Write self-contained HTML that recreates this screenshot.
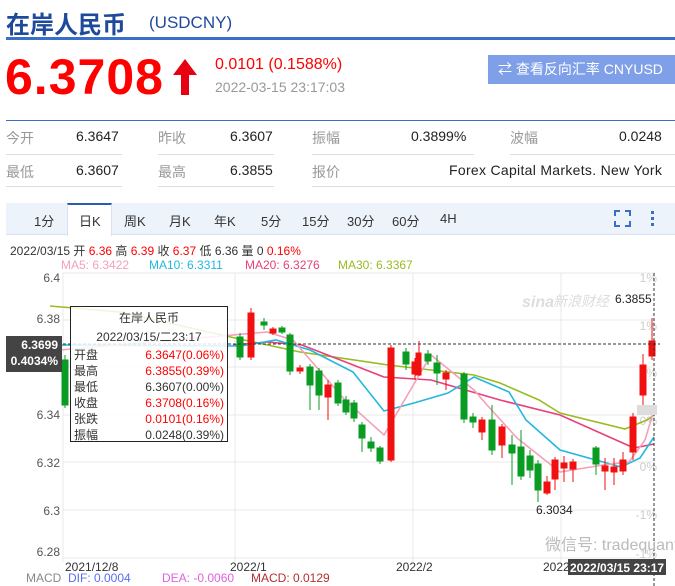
<!DOCTYPE html>
<html><head><meta charset="utf-8"><style>
*{margin:0;padding:0;box-sizing:border-box}
body{width:675px;height:586px;background:#fff;font-family:"Liberation Sans","Noto Sans CJK SC",sans-serif;position:relative;overflow:hidden;color:#333}
.a{position:absolute;white-space:nowrap}
</style></head><body>
<div class="a" style="left:6px;top:5px;font-size:24px;font-weight:bold;color:#1f4a9c;font-family:'Liberation Sans','Noto Sans CJK SC',sans-serif">在岸人民币</div>
<div class="a" style="left:149px;top:13px;font-size:17px;color:#1f4a9c">(USDCNY)</div>
<div class="a" style="left:6px;top:37px;width:669px;height:3px;background:#3a6fc8"></div>
<div class="a" style="left:5px;top:48px;font-size:50px;font-weight:bold;color:#f00;letter-spacing:1px">6.3708</div>
<svg class="a" style="left:170px;top:57px" width="30" height="40"><path d="M15 2 L27 18 H19 V38 H11 V18 H3 Z" fill="#e60012"/></svg>
<div class="a" style="left:215px;top:56px;font-size:16px;color:#f00">0.0101 (0.1588%)</div>
<div class="a" style="left:215px;top:79px;font-size:14px;color:#999">2022-03-15 23:17:03</div>
<div class="a" style="left:488px;top:55px;width:187px;height:29px;background:#7f9fe8;color:#fff;font-size:14px;line-height:29px;padding-left:10px">⇄ 查看反向汇率 CNYUSD</div>
<div class="a" style="left:6px;top:120px;width:669px;height:1px;background:#3a6fc8"></div>
<div class="a" style="font-size:14px;color:#999;left:6px;top:128px">今开</div>
<div class="a" style="font-size:14px;color:#222;left:76px;top:128px">6.3647</div>
<div class="a" style="font-size:14px;color:#999;left:158px;top:128px">昨收</div>
<div class="a" style="font-size:14px;color:#222;left:230px;top:128px">6.3607</div>
<div class="a" style="font-size:14px;color:#999;left:312px;top:128px">振幅</div>
<div class="a" style="font-size:14px;color:#222;left:411px;top:128px">0.3899%</div>
<div class="a" style="font-size:14px;color:#999;left:510px;top:128px">波幅</div>
<div class="a" style="font-size:14px;color:#222;left:619px;top:128px">0.0248</div>
<div class="a" style="left:6px;top:154px;width:116px;height:1px;background:#ddd"></div>
<div class="a" style="left:158px;top:154px;width:116px;height:1px;background:#ddd"></div>
<div class="a" style="left:312px;top:154px;width:162px;height:1px;background:#ddd"></div>
<div class="a" style="left:510px;top:154px;width:165px;height:1px;background:#ddd"></div>
<div class="a" style="font-size:14px;color:#999;left:6px;top:162px">最低</div>
<div class="a" style="font-size:14px;color:#222;left:76px;top:162px">6.3607</div>
<div class="a" style="font-size:14px;color:#999;left:158px;top:162px">最高</div>
<div class="a" style="font-size:14px;color:#222;left:230px;top:162px">6.3855</div>
<div class="a" style="font-size:14px;color:#999;left:312px;top:162px">报价</div>
<div class="a" style="font-size:14px;color:#222;left:449px;top:162px;letter-spacing:0.3px">Forex Capital Markets. New York</div>
<div class="a" style="left:6px;top:186px;width:116px;height:1px;background:#ddd"></div>
<div class="a" style="left:158px;top:186px;width:116px;height:1px;background:#ddd"></div>
<div class="a" style="left:312px;top:186px;width:669px;height:1px;background:#ddd"></div>
<div class="a" style="left:6px;top:203px;width:669px;height:32px;background:#edf3fb;border-bottom:1px solid #d6e2f2"></div>
<div class="a" style="left:67px;top:203px;width:45px;height:33px;background:#fff;border-top:2px solid #2a5db0;border-left:1px solid #d6e2f2;border-right:1px solid #d6e2f2"></div>
<div class="a" style="top:211px;font-size:13px;color:#333;left:34px">1分</div>
<div class="a" style="top:211px;font-size:13px;color:#333;left:79px">日K</div>
<div class="a" style="top:211px;font-size:13px;color:#333;left:124px">周K</div>
<div class="a" style="top:211px;font-size:13px;color:#333;left:169px">月K</div>
<div class="a" style="top:211px;font-size:13px;color:#333;left:214px">年K</div>
<div class="a" style="top:211px;font-size:13px;color:#333;left:261px">5分</div>
<div class="a" style="top:211px;font-size:13px;color:#333;left:302px">15分</div>
<div class="a" style="top:211px;font-size:13px;color:#333;left:347px">30分</div>
<div class="a" style="top:211px;font-size:13px;color:#333;left:392px">60分</div>
<div class="a" style="top:211px;font-size:13px;color:#333;left:440px">4H</div>
<svg class="a" style="left:614px;top:210px" width="50" height="18"><g stroke="#3a6fc8" stroke-width="2" fill="none"><path d="M1 6V1H6M11 1H16V6M16 11V16H11M6 16H1V11"/></g><g fill="#3a6fc8"><rect x="37" y="1" width="3" height="3"/><rect x="37" y="7" width="3" height="3"/><rect x="37" y="13" width="3" height="3"/></g></svg>
<div class="a" style="left:10px;top:242px;font-size:12px;color:#333">2022/03/15 开 <span style="color:#f00">6.36</span> 高 <span style="color:#f00">6.39</span> 收 <span style="color:#f00">6.37</span> 低 6.36 量 0 <span style="color:#f00">0.16%</span></div>
<div class="a" style="left:61px;top:258px;font-size:12px;color:#f4a0b8">MA5: 6.3422</div>
<div class="a" style="left:149px;top:258px;font-size:12px;color:#22b8dd">MA10: 6.3311</div>
<div class="a" style="left:245px;top:258px;font-size:12px;color:#e8407a">MA20: 6.3276</div>
<div class="a" style="left:338px;top:258px;font-size:12px;color:#99bb22">MA30: 6.3367</div>
<svg class="a" style="left:0;top:270px" width="675" height="316" font-family="Liberation Sans,sans-serif">
<g transform="translate(0,-270)">
<g stroke="#e8e8e8" stroke-width="1">
<line x1="63" y1="273" x2="655" y2="273"/><line x1="63" y1="320" x2="655" y2="320"/><line x1="63" y1="367" x2="655" y2="367"/><line x1="63" y1="415" x2="655" y2="415"/><line x1="63" y1="462" x2="655" y2="462"/><line x1="63" y1="510" x2="655" y2="510"/><line x1="63" y1="558" x2="655" y2="558"/>
<line x1="63" y1="273" x2="63" y2="562"/><line x1="235" y1="273" x2="235" y2="562"/><line x1="413" y1="273" x2="413" y2="562"/><line x1="561" y1="273" x2="561" y2="562"/>
</g>
<g font-size="12" fill="#555" text-anchor="end"><text x="60" y="282">6.4</text><text x="60" y="323">6.38</text><text x="60" y="372">6.36</text><text x="60" y="419">6.34</text><text x="60" y="467">6.32</text><text x="60" y="515">6.3</text><text x="60" y="556">6.28</text></g>
<g font-size="12" fill="#ccc" text-anchor="end"><text x="657" y="282">1%</text><text x="657" y="330">1%</text><text x="657" y="377">0%</text><text x="657" y="425">0%</text><text x="657" y="471">0%</text><text x="657" y="519">-1%</text><text x="657" y="558">-1%</text></g>
<g font-size="16" fill="#ddd" font-style="italic" font-weight="bold"><text x="522" y="307">sina</text><text x="553" y="306" font-size="14" font-weight="normal">新浪财经</text></g>
<path d="M50 306 L120 312 L235 338 L300 352 L388 365 L474 375 L500 383 L539 400 L560 413 L625 429 L647 420 L654 415" stroke="#99bb22" stroke-width="1.6" fill="none"/>
<path d="M233 345 L267 342 L302 345 L384 377 L431 380 L500 400 L560 415 L634 448 L654 444" stroke="#e8407a" stroke-width="1.6" fill="none"/>
<path d="M60 345 L241 346 L276 340 L310 350 L353 372 L384 411 L414 403 L448 393 L474 377 L509 392 L526 420 L560 450 L621 467 L640 458 L654 437" stroke="#22b8dd" stroke-width="1.6" fill="none"/>
<path d="M60 350 L267 332 L293 340 L345 400 L384 435 L431 355 L474 390 L487 405 L517 438 L560 472 L603 465 L629 462 L645 440 L654 410" stroke="#f4a0b8" stroke-width="1.6" fill="none"/>
</g>
<g transform="translate(0,-270)" stroke-width="1">
<g fill="#0a9b22" stroke="#0a9b22">
<line x1="65" y1="355" x2="65" y2="408"/><rect x="62" y="360" width="6" height="45"/>
<line x1="240" y1="333" x2="240" y2="360"/><rect x="237" y="337" width="6" height="20"/>
<line x1="264" y1="318" x2="264" y2="330"/><rect x="261" y="322" width="6" height="3"/>
<line x1="282" y1="326" x2="282" y2="334"/><rect x="279" y="328" width="6" height="4"/>
<line x1="290" y1="333" x2="290" y2="375"/><rect x="287" y="335" width="6" height="36"/>
<line x1="310" y1="364" x2="310" y2="410"/><rect x="307" y="367" width="6" height="18"/>
<line x1="319" y1="368" x2="319" y2="410"/><rect x="316" y="371" width="6" height="24"/>
<line x1="338" y1="380" x2="338" y2="406"/><rect x="335" y="383" width="6" height="20"/>
<line x1="346" y1="396" x2="346" y2="415"/><rect x="343" y="400" width="6" height="12"/>
<line x1="354" y1="400" x2="354" y2="422"/><rect x="351" y="403" width="6" height="15"/>
<line x1="362" y1="422" x2="362" y2="452"/><rect x="359" y="425" width="6" height="13"/>
<line x1="371" y1="437" x2="371" y2="452"/><rect x="368" y="442" width="6" height="6"/>
<line x1="380" y1="446" x2="380" y2="464"/><rect x="377" y="448" width="6" height="13"/>
<line x1="406" y1="348" x2="406" y2="370"/><rect x="403" y="352" width="6" height="12"/>
<line x1="428" y1="350" x2="428" y2="365"/><rect x="425" y="354" width="6" height="7"/>
<line x1="437" y1="355" x2="437" y2="385"/><rect x="434" y="363" width="6" height="10"/>
<line x1="464" y1="372" x2="464" y2="423"/><rect x="461" y="374" width="6" height="45"/>
<line x1="473" y1="413" x2="473" y2="428"/><rect x="470" y="417" width="6" height="5"/>
<line x1="492" y1="405" x2="492" y2="455"/><rect x="489" y="420" width="6" height="30"/>
<line x1="512" y1="435" x2="512" y2="485"/><rect x="509" y="445" width="6" height="8"/>
<line x1="521" y1="430" x2="521" y2="480"/><rect x="518" y="447" width="6" height="29"/>
<line x1="530" y1="450" x2="530" y2="478"/><rect x="527" y="456" width="6" height="14"/>
<line x1="538" y1="460" x2="538" y2="502"/><rect x="535" y="464" width="6" height="26"/>
<line x1="596" y1="446" x2="596" y2="475"/><rect x="593" y="448" width="6" height="16"/>
</g>
<g fill="#f01010" stroke="#f01010">
<line x1="251" y1="308" x2="251" y2="360"/><rect x="248" y="313" width="6" height="44"/>
<line x1="273" y1="327" x2="273" y2="335"/><rect x="270" y="329" width="6" height="4"/>
<line x1="300" y1="365" x2="300" y2="374"/><rect x="297" y="368" width="6" height="3"/>
<line x1="328" y1="380" x2="328" y2="420"/><rect x="325" y="385" width="6" height="12"/>
<line x1="391" y1="345" x2="391" y2="462"/><rect x="388" y="348" width="6" height="112"/>
<line x1="415" y1="358" x2="415" y2="380"/><rect x="412" y="362" width="6" height="12"/>
<line x1="419" y1="341" x2="419" y2="376"/><rect x="416" y="353" width="5" height="22"/>
<line x1="446" y1="370" x2="446" y2="390"/><rect x="443" y="373" width="6" height="6"/>
<line x1="482" y1="417" x2="482" y2="440"/><rect x="479" y="420" width="6" height="12"/>
<line x1="502" y1="424" x2="502" y2="458"/><rect x="499" y="427" width="6" height="18"/>
<line x1="547" y1="476" x2="547" y2="495"/><rect x="544" y="482" width="6" height="11"/>
<line x1="555" y1="457" x2="555" y2="490"/><rect x="552" y="460" width="6" height="19"/>
<line x1="564" y1="456" x2="564" y2="482"/><rect x="561" y="463" width="6" height="5"/>
<line x1="573" y1="459" x2="573" y2="482"/><rect x="570" y="462" width="6" height="7"/>
<line x1="605" y1="458" x2="605" y2="490"/><rect x="602" y="466" width="6" height="5"/>
<line x1="614" y1="458" x2="614" y2="485"/><rect x="611" y="467" width="6" height="5"/>
<line x1="623" y1="452" x2="623" y2="475"/><rect x="620" y="460" width="6" height="11"/>
<line x1="633" y1="413" x2="633" y2="460"/><rect x="630" y="417" width="6" height="35"/>
<line x1="643" y1="354" x2="643" y2="405"/><rect x="640" y="365" width="6" height="30"/>
<line x1="652" y1="318" x2="652" y2="360"/><rect x="649" y="341" width="6" height="15"/>
</g>
<line x1="63" y1="344" x2="660" y2="344" stroke="#333" stroke-dasharray="3,2"/>
<line x1="654" y1="273" x2="654" y2="586" stroke="#333" stroke-dasharray="3,2"/>
<text x="615" y="303" font-size="12" fill="#222">6.3855</text>
<text x="536" y="514" font-size="12" fill="#222">6.3034</text>
<rect x="637" y="405" width="20" height="10" fill="#ddd"/>
<g font-size="12" fill="#333"><text x="65" y="571">2021/12/8</text><text x="230" y="571">2022/1</text><text x="396" y="571">2022/2</text><text x="543" y="571">2022</text></g>
<text x="545" y="550" font-size="16" fill="#bbb">微信号: tradequant</text>
<rect x="568" y="559" width="98" height="16" fill="#444"/>
<text x="570" y="572" font-size="12" fill="#fff" font-weight="bold">2022/03/15 23:17</text>
<rect x="6" y="336" width="56" height="36" fill="#444"/>
<text x="58" y="349" font-size="12" fill="#fff" font-weight="bold" text-anchor="end">6.3699</text>
<text x="58" y="365" font-size="12" fill="#fff" font-weight="bold" text-anchor="end">0.4034%</text>
</g>
</svg>
<div class="a" style="left:70px;top:306px;width:158px;height:136px;background:rgba(255,255,255,0.85);border:1px solid #222;font-size:12px;line-height:16px">
<div style="text-align:center;margin-top:3px">在岸人民币</div>
<div style="text-align:center;margin-top:3px;margin-bottom:2px">2022/03/15/二23:17</div>
<div style="display:flex;justify-content:space-between;padding:0 3px"><span>开盘</span><span style="color:#f00">6.3647(0.06%)</span></div>
<div style="display:flex;justify-content:space-between;padding:0 3px"><span>最高</span><span style="color:#f00">6.3855(0.39%)</span></div>
<div style="display:flex;justify-content:space-between;padding:0 3px"><span>最低</span><span>6.3607(0.00%)</span></div>
<div style="display:flex;justify-content:space-between;padding:0 3px"><span>收盘</span><span style="color:#f00">6.3708(0.16%)</span></div>
<div style="display:flex;justify-content:space-between;padding:0 3px"><span>张跌</span><span style="color:#f00">0.0101(0.16%)</span></div>
<div style="display:flex;justify-content:space-between;padding:0 3px"><span>振幅</span><span>0.0248(0.39%)</span></div>
</div>
<div class="a" style="left:26px;top:571px;font-size:12px;color:#888">MACD</div>
<div class="a" style="left:68px;top:571px;font-size:12px;color:#5a6cf0">DIF: 0.0004</div>
<div class="a" style="left:162px;top:571px;font-size:12px;color:#e060e0">DEA: -0.0060</div>
<div class="a" style="left:251px;top:571px;font-size:12px;color:#b03030">MACD: 0.0129</div>
</body></html>
